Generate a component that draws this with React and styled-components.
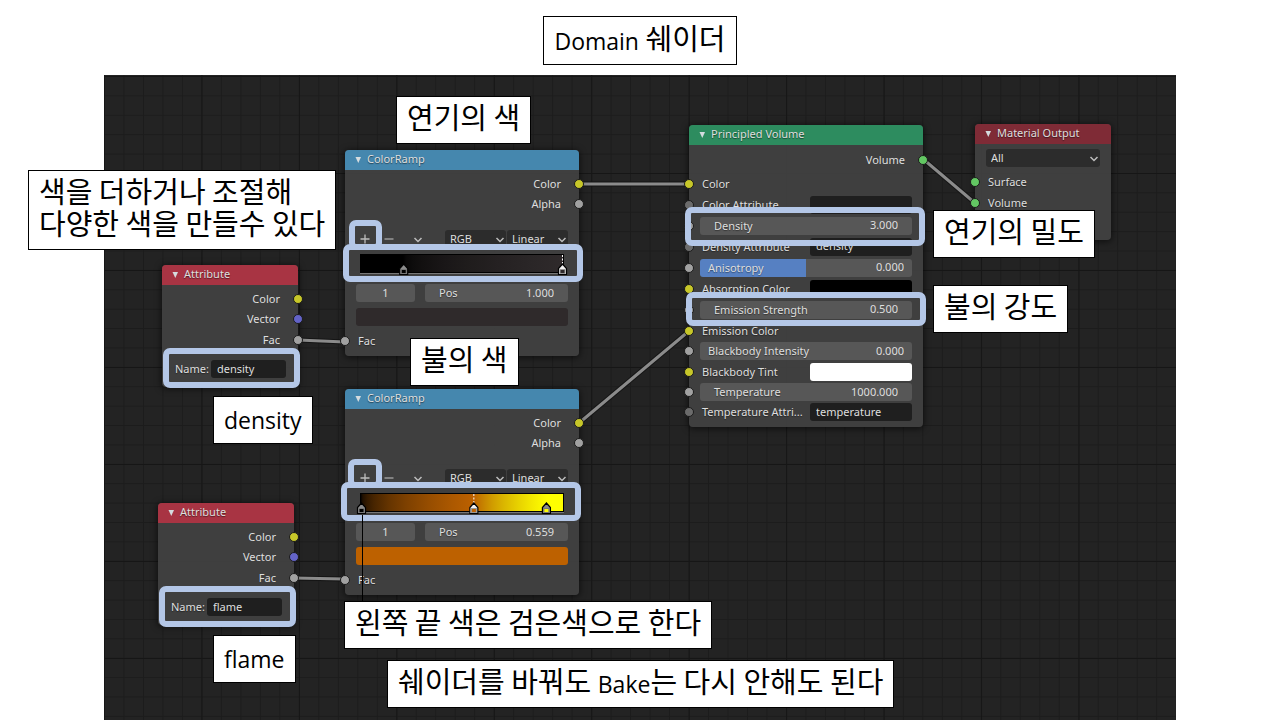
import React, { useState } from 'react';
import styled, { createGlobalStyle } from 'styled-components';

const GlobalStyle = createGlobalStyle`
  * {
    box-sizing: border-box;
  }

  body {
    margin: 0;
    background: #fff;
    overflow-x: hidden;
  }

  button, input, select {
    font: inherit;
    color: inherit;
    margin: 0;
  }
`;

const Slide = styled.main`
  display: flex;
  flex-direction: column;
  min-height: 100vh;
`;

const Header = styled.header`
  display: flex;
  justify-content: center;
  padding: 16px 0 10px;
`;

const Note = styled.p`
  margin: 0;
  padding: 3px 10px 11px;
  border: 1px solid #000;
  background: #fff;
  color: #000;
  font-family: 'Noto Sans CJK KR', sans-serif;
  font-weight: 400;
  font-size: 29px;
  line-height: 32px;
  white-space: nowrap;
`;

const Title = styled(Note).attrs({ as: 'h1' })`
  padding-top: 4px;
`;

const Latin = styled.span`
  font-family: 'Open Sans', 'Noto Sans', sans-serif;
  font-size: 23px;
  line-height: 1;
`;

/* the node editor canvas */
const Canvas = styled.section`
  position: relative;
  flex: 1;
  min-height: 645px;
  margin: 0 104px;
  color: #dedede;
  font-family: 'Noto Sans', 'Open Sans', sans-serif;
  font-size: 11px;
  line-height: 16px;
  background-color: #232323;
  background-image:
    linear-gradient(to right, #161616 1px, transparent 1px),
    linear-gradient(to bottom, #161616 1px, transparent 1px),
    linear-gradient(to right, #1c1c1c 1px, transparent 1px),
    linear-gradient(to bottom, #1c1c1c 1px, transparent 1px);
  background-size:
    calc(100% / 11) 100%,
    100% 97px,
    calc(100% / 55) 100%,
    100% calc(97px / 5);
  background-position: 0 0, 0 1px, 0 0, 0 1px;
`;

const Links = styled.svg`
  position: absolute;
  inset: 0;
  width: 100%;
  height: 100%;
  overflow: visible;
  pointer-events: none;
`;

const Pinned = styled.div`
  position: absolute;
  left: ${(p) => p.$x}px;
  top: ${(p) => p.$y}px;
`;

const NodeBox = styled(Pinned).attrs({ as: 'article' })`
  display: flex;
  flex-direction: column;
  width: ${(p) => p.$w}px;
  padding-bottom: ${(p) => p.$bottom || 5}px;
  border-radius: 4px;
  background: rgba(65, 65, 65, 0.96);
  box-shadow: 0 1px 6px 1px rgba(0, 0, 0, 0.55);
`;

const NodeHeader = styled.header`
  display: flex;
  align-items: center;
  gap: 5px;
  height: 20px;
  padding: 0 8px 2px;
  margin-bottom: 4px;
  border-radius: 4px 4px 0 0;
  background: ${(p) => p.$color};
  text-shadow: 0 1px 1px rgba(0, 0, 0, 0.5);
`;

const NodeTitle = styled.h2`
  margin: 0;
  font-size: 11px;
  font-weight: 400;
`;

const IconButton = styled.button`
  display: flex;
  align-items: center;
  justify-content: center;
  width: ${(p) => p.$w || 9}px;
  height: 18px;
  padding: 0;
  border: 0;
  background: none;
`;

const Row = styled.div`
  position: relative;
  display: flex;
  align-items: center;
  justify-content: ${(p) => (p.$out ? 'flex-end' : 'flex-start')};
  height: ${(p) => p.$h || 20}px;
  padding: 0 ${(p) => (p.$out ? 18 : 11)}px;
  margin-top: ${(p) => p.$gap || 0}px;
`;

const Socket = styled.i`
  position: absolute;
  top: 50%;
  ${(p) => (p.$out ? 'right' : 'left')}: -5px;
  width: 10px;
  height: 10px;
  margin-top: -5px;
  border: 1px solid #1b1b1b;
  border-radius: 50%;
  background: ${(p) => p.$color};
`;

const RowLabel = styled.label`
  flex: none;
  width: ${(p) => (p.$w ? p.$w + 'px' : 'auto')};
  padding-left: ${(p) => p.$pad || 0}px;
  text-shadow: 0 1px 1px rgba(0, 0, 0, 0.4);
`;

const NumberBox = styled.div`
  display: flex;
  align-items: center;
  flex: ${(p) => (p.$w ? 'none' : 1)};
  width: ${(p) => (p.$w ? p.$w + 'px' : 'auto')};
  min-width: 0;
  height: 18px;
  padding: 0 ${(p) => (p.$slider ? 8 : 14)}px;
  border-radius: 3px;
  background: ${(p) =>
    p.$fill
      ? `linear-gradient(to right, #5680c2 ${p.$fill}%, #575757 ${p.$fill}%)`
      : '#575757'};
`;

const NumberInput = styled.input`
  flex: 1;
  min-width: 0;
  width: 0;
  height: 18px;
  padding: 0 0 2px;
  border: 0;
  outline: none;
  background: none;
  text-align: ${(p) => (p.$center ? 'center' : 'right')};
`;

const TextInput = styled.input`
  flex: ${(p) => (p.$w ? 'none' : 1)};
  width: ${(p) => (p.$w ? p.$w + 'px' : 0)};
  min-width: 0;
  height: 18px;
  padding: 0 6px 2px;
  border: 0;
  border-radius: 3px;
  outline: none;
  background: #1f1f1f;
`;

const Swatch = styled.button`
  flex: 1;
  height: 18px;
  padding: 0;
  border: 0;
  border-radius: 3px;
  background: ${(p) => p.$color};
`;

const SelectWrap = styled.div`
  position: relative;
  display: flex;
  flex: ${(p) => (p.$w ? 'none' : 1)};
  width: ${(p) => (p.$w ? p.$w + 'px' : 'auto')};

  svg {
    position: absolute;
    right: 0;
    top: 3px;
    pointer-events: none;
  }
`;

const Select = styled.select`
  appearance: none;
  width: 100%;
  height: 18px;
  padding: 0 5px 1px;
  border: 0;
  border-radius: 3px;
  outline: none;
  background: #2c2c2c;
`;

const Selects = styled.div`
  display: flex;
  gap: 1px;
  margin-left: auto;
`;

const RampSvg = styled.svg`
  flex: none;
  margin-left: 4px;
  overflow: visible;
`;

const Highlight = styled(Pinned)`
  width: ${(p) => p.$w}px;
  height: ${(p) => p.$h}px;
  border: 6px solid #b4c7e7;
  border-radius: 7px;
  pointer-events: none;
`;

const yellow = '#c7c729';
const grey = '#a1a1a1';
const darkGrey = '#6b6b6b';
const green = '#63c763';
const violet = '#6363c7';

const Chevron = () => (
  <svg width="12" height="12" viewBox="0 0 12 12" fill="none" stroke="#bdbdbd" strokeWidth="1.5">
    <path d="M2.5 5 6 8.5 9.5 5" />
  </svg>
);

const Plus = () => (
  <svg width="10" height="10" viewBox="0 0 10 10" stroke="#bdbdbd" strokeWidth="1.3">
    <path d="M5 .5v9M.5 5h9" />
  </svg>
);

const Minus = () => (
  <svg width="10" height="10" viewBox="0 0 10 10" stroke="#a8a8a8" strokeWidth="1.3">
    <path d="M.5 5h9" />
  </svg>
);

const Node = ({ title, color, children, ...box }) => (
  <NodeBox {...box}>
    <NodeHeader $color={color}>
      <IconButton aria-label={`Collapse ${title}`}>
        <svg width="8" height="8" viewBox="0 0 8 8" fill="#d5dcdf">
          <path d="M1.5 2h5.5L4.3 8z" />
        </svg>
      </IconButton>
      <NodeTitle>{title}</NodeTitle>
    </NodeHeader>
    {children}
  </NodeBox>
);

const Output = ({ label, color, h }) => (
  <Row $out $h={h}>
    <span>{label}</span>
    <Socket $out $color={color} />
  </Row>
);

const Input = ({ label, color, gap, h }) => (
  <Row $gap={gap} $h={h}>
    <Socket $color={color} />
    <RowLabel as="span" $pad={2}>{label}</RowLabel>
  </Row>
);

const NumberRow = ({ id, label, value, h = 21, slider, fill }) => (
  <Row $h={h}>
    <Socket $color={grey} />
    <NumberBox $slider={slider} $fill={fill}>
      <RowLabel htmlFor={id}>{label}</RowLabel>
      <NumberInput id={id} defaultValue={value} />
    </NumberBox>
  </Row>
);

const TextRow = ({ id, label, value, h = 21 }) => (
  <Row $h={h}>
    <Socket $color={darkGrey} />
    <RowLabel htmlFor={id} $w={110} $pad={2}>{label}</RowLabel>
    <TextInput id={id} defaultValue={value} />
  </Row>
);

const SwatchRow = ({ id, label, color }) => (
  <Row $h={21}>
    <Socket $color={yellow} />
    <RowLabel htmlFor={id} $w={110} $pad={2}>{label}</RowLabel>
    <Swatch id={id} $color={color} />
  </Row>
);

const Dropdown = ({ label, options, w }) => (
  <SelectWrap $w={w}>
    <Select aria-label={label}>
      {options.map((o) => (
        <option key={o}>{o}</option>
      ))}
    </Select>
    <Chevron />
  </SelectWrap>
);

const channels = (hex) => [1, 3, 5].map((i) => parseInt(hex.slice(i, i + 2), 16) / 255);

// colors blend in linear light, so the svg gradient gets extra stops in between
const blendStops = (stops) => {
  const out = [];
  stops.forEach((stop, i) => {
    out.push(stop);
    const next = stops[i + 1];
    if (!next) return;
    const a = channels(stop.color);
    const b = channels(next.color);
    [0.02, 0.06, 0.12, 0.25, 0.4, 0.6, 0.8].forEach((t) => {
      const rgb = a.map((c, k) =>
        Math.round(255 * (c ** 2.2 * (1 - t) + b[k] ** 2.2 * t) ** (1 / 2.2))
      );
      out.push({
        pos: stop.pos + (next.pos - stop.pos) * t,
        color: `rgb(${rgb.join(',')})`,
      });
    });
  });
  return out;
};

const Ramp = ({ id, stops, active }) => (
  <RampSvg width="204" height="20" viewBox="0 0 204 20">
    <defs>
      <linearGradient id={id}>
        {blendStops(stops).map((s) => (
          <stop key={s.pos} offset={s.pos} stopColor={s.color} />
        ))}
      </linearGradient>
    </defs>
    <rect x=".5" y=".5" width="203" height="18" fill={`url(#${id})`} stroke="#000" />
    <path d="M0 19.5h204" stroke="#777" />
    {stops.map((s, i) => (
      <g key={s.pos} transform={`translate(${1.5 + s.pos * 201} 0)`}>
        {i === active && <path d="M0 1v9" stroke="#fff" strokeDasharray="2 1.5" />}
        <path
          d="M-4 20.5V14.5L0 10l4 4.5v6z"
          fill={i === active ? '#f2f2f2' : '#8c8c8c'}
          stroke="#000"
          strokeWidth="1.2"
        />
        <rect
          x="-2.5"
          y="15.5"
          width="5"
          height="4"
          fill={s.color}
          stroke={i === active ? '#999' : '#777'}
        />
      </g>
    ))}
  </RampSvg>
);

const ColorRamp = ({ id, x, y, stops, active, pos, swatch }) => {
  const [index, setIndex] = useState('1');

  return (
    <Node title="ColorRamp" color="#4587ae" $x={x} $y={y} $w={234}>
      <Output label="Color" color={yellow} />
      <Output label="Alpha" color={grey} />
      <Row $h={18} $gap={16}>
        <IconButton $w={18} aria-label="Add stop"><Plus /></IconButton>
        <IconButton $w={29} aria-label="Remove stop"><Minus /></IconButton>
        <IconButton $w={29} aria-label="Ramp tools"><Chevron /></IconButton>
        <Selects>
          <Dropdown label="Color mode" options={['RGB', 'HSV', 'HSL']} w={61} />
          <Dropdown label="Interpolation" options={['Linear', 'Ease', 'Constant']} w={61} />
        </Selects>
      </Row>
      <Row $gap={6}>
        <Ramp id={id} stops={stops} active={active} />
      </Row>
      <Row $h={18} $gap={10}>
        <NumberBox $w={59} $slider>
          <NumberInput
            $center
            aria-label="Active stop"
            value={index}
            onChange={(e) => setIndex(e.target.value)}
          />
        </NumberBox>
        <RowLabel as="span" $w={10} />
        <NumberBox>
          <RowLabel htmlFor={`${id}-pos`}>Pos</RowLabel>
          <NumberInput id={`${id}-pos`} defaultValue={pos} />
        </NumberBox>
      </Row>
      <Row $h={18} $gap={6}>
        <Swatch aria-label="Stop color" $color={swatch} />
      </Row>
      <Input label="Fac" color={grey} gap={5} />
    </Node>
  );
};

const Attribute = ({ id, x, y, name }) => (
  <Node title="Attribute" color="#a83443" $x={x} $y={y} $w={136} $bottom={9}>
    <Output label="Color" color={yellow} />
    <Output label="Vector" color={violet} />
    <Output label="Fac" color={grey} h={21} />
    <Row $h={18} $gap={10}>
      <RowLabel htmlFor={id} $w={38} $pad={2}>Name:</RowLabel>
      <TextInput id={id} defaultValue={name} $w={75} />
    </Row>
  </Node>
);

const smokeStops = [
  { pos: 0.21, color: '#000000' },
  { pos: 1, color: '#2f2a2b' },
];

const fireStops = [
  { pos: 0, color: '#000000' },
  { pos: 0.559, color: '#bd6100' },
  { pos: 0.92, color: '#ffff00' },
];

const links = [
  'M475 109H585',
  'M194 265 241 267',
  'M190 503 241 504',
  'M475 348 585 256',
  'M819 84 871 128',
];

const App = () => (
  <>
    <GlobalStyle />
    <Slide>
      <Header>
        <Title><Latin>Domain</Latin> 쉐이더</Title>
      </Header>
      <Canvas>
        <Links fill="none">
          {links.map((d) => (
            <g key={d}>
              <path d={d} stroke="#151515" strokeWidth="5" />
              <path d={d} stroke="#8b8b8b" strokeWidth="3" />
            </g>
          ))}
        </Links>

        <Attribute id="attr-density" x={58} y={190} name="density" />
        <Attribute id="attr-flame" x={54} y={428} name="flame" />

        <ColorRamp
          id="smoke-ramp"
          x={241}
          y={75}
          stops={smokeStops}
          active={1}
          pos="1.000"
          swatch="#2f2a2b"
        />
        <ColorRamp
          id="fire-ramp"
          x={241}
          y={314}
          stops={fireStops}
          active={1}
          pos="0.559"
          swatch="#bd6100"
        />

        <Node title="Principled Volume" color="#2d8c5f" $x={585} $y={50} $w={234}>
          <Output label="Volume" color={green} h={21} />
          <Input label="Color" color={yellow} gap={3} h={21} />
          <TextRow id="color-attr" label="Color Attribute" value="" />
          <NumberRow id="density" label="Density" value="3.000" />
          <TextRow id="density-attr" label="Density Attribute" value="density" />
          <NumberRow id="anisotropy" label="Anisotropy" value="0.000" slider fill={50} />
          <SwatchRow id="absorption" label="Absorption Color" color="#000" />
          <NumberRow id="emission" label="Emission Strength" value="0.500" />
          <Input label="Emission Color" color={yellow} h={21} />
          <NumberRow id="blackbody" label="Blackbody Intensity" value="0.000" h={20} slider />
          <SwatchRow id="tint" label="Blackbody Tint" color="#fff" />
          <NumberRow id="temperature" label="Temperature" value="1000.000" h={20} />
          <TextRow id="temperature-attr" label="Temperature Attri..." value="temperature" h={20} />
        </Node>

        <Node title="Material Output" color="#7f2b36" $x={871} $y={49} $w={136} $bottom={27}>
          <Row>
            <Dropdown label="Target" options={['All', 'Cycles', 'Eevee']} />
          </Row>
          <Input label="Surface" color={green} gap={3} h={21} />
          <Input label="Volume" color={green} h={21} />
        </Node>

        <Highlight $x={245} $y={145} $w={33} $h={30} />
        <Highlight $x={239} $y={169} $w={240} $h={38} />
        <Highlight $x={244} $y={384} $w={34} $h={29} />
        <Highlight $x={237} $y={407} $w={240} $h={39} />
        <Highlight $x={59} $y={273} $w={137} $h={40} />
        <Highlight $x={55} $y={511} $w={137} $h={41} />
        <Highlight $x={581} $y={132} $w={240} $h={39} />
        <Highlight $x={582} $y={217} $w={240} $h={34} />

        {/* leader from the left stop down to its note */}
        <Links>
          <path d="M258.5 440V527" stroke="#000" />
        </Links>

        <Pinned $x={292} $y={21}><Note>연기의 색</Note></Pinned>
        <Pinned $x={-76} $y={95}>
          <Note>색을 더하거나 조절해<br />다양한 색을 만들수 있다</Note>
        </Pinned>
        <Pinned $x={306} $y={263}><Note>불의 색</Note></Pinned>
        <Pinned $x={109} $y={321}><Note><Latin>density</Latin></Note></Pinned>
        <Pinned $x={109} $y={560}><Note><Latin>flame</Latin></Note></Pinned>
        <Pinned $x={240} $y={526}><Note>왼쪽 끝 색은 검은색으로 한다</Note></Pinned>
        <Pinned $x={283} $y={585}>
          <Note>쉐이더를 바꿔도 <Latin>Bake</Latin>는 다시 안해도 된다</Note>
        </Pinned>
        <Pinned $x={829} $y={135}><Note>연기의 밀도</Note></Pinned>
        <Pinned $x={829} $y={210}><Note>불의 강도</Note></Pinned>
      </Canvas>
    </Slide>
  </>
);

export default App;
